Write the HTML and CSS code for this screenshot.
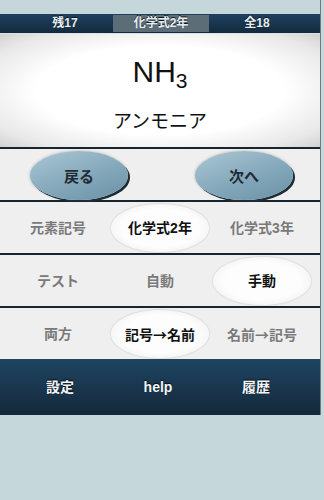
FILE: index.html
```html
<!DOCTYPE html>
<html lang="ja">
<head>
  <meta charset="UTF-8" />
  <title>化学式カード</title>
  <meta name="viewport" content="width=device-width, initial-scale=1.0" />
  <link rel="stylesheet" href="styles.css">
</head>
<body>
  <div class="app">
    <div class="status-bar">
      <div class="status-cell">残17</div>
      <div class="status-cell current">化学式2年</div>
      <div class="status-cell">全18</div>
    </div>
    <div class="card">
      <div class="formula">NH<sub>3</sub></div>
      <div class="name">アンモニア</div>
    </div>
    <div class="row nav-row">
      <button class="nav-btn">戻る</button>
      <button class="nav-btn">次へ</button>
    </div>
    <div class="row choice-row">
      <div class="choice">元素記号</div>
      <div class="choice selected">化学式2年</div>
      <div class="choice">化学式3年</div>
    </div>
    <div class="row choice-row">
      <div class="choice">テスト</div>
      <div class="choice">自動</div>
      <div class="choice selected">手動</div>
    </div>
    <div class="row choice-row">
      <div class="choice">両方</div>
      <div class="choice selected">記号<span class="arrow">→</span>名前</div>
      <div class="choice">名前<span class="arrow">→</span>記号</div>
    </div>
    <div class="footer">
      <div class="footer-item">設定</div>
      <div class="footer-item">help</div>
      <div class="footer-item">履歴</div>
    </div>
  </div>
</body>
</html>
```

FILE: styles.css
```css
body {
  margin: 0;
  background: #c6d7db;
  font-family: 'Liberation Sans', 'Noto Sans CJK JP', sans-serif;
}
.app {
  width: 320px;
  padding-top: 14px;
  border-right: 1px solid #6d7c84;
}
.status-bar {
  display: flex;
  justify-content: center;
  padding: 1px 15px 1px 17px;
  height: 17px;
  background: linear-gradient(#1f4160, #132a3d);
  border-bottom: 1px solid #d9e2e6;
}
.status-cell {
  width: 96px;
  text-align: center;
  font-size: 12px;
  font-weight: 700;
  line-height: 17px;
  color: #e6edf0;
  text-shadow: 0 -1px 0 #0b1620;
}
.status-cell.current {
  background: #5d6d77;
}
.card {
  height: 113px;
  box-sizing: border-box;
  padding-top: 18px;
  text-align: center;
  background: radial-gradient(ellipse at center, #ffffff 55%, #e8e8e8 85%, #d2d2d2 100%);
  color: #111;
}
.formula {
  font-family: 'Liberation Sans', Arial, sans-serif;
  font-size: 30px;
  line-height: 40px;
}
.formula sub {
  font-size: 21px;
  vertical-align: -6px;
  line-height: 0;
}
.name {
  margin-top: 18px;
  font-size: 19px;
  line-height: 24px;
}
.row {
  height: 51px;
  background: #efefef;
  border-top: 2px solid #18252f;
}
.nav-row {
  display: flex;
  align-items: center;
  justify-content: space-between;
  padding: 0 27px 0 30px;
}
.nav-btn {
  width: 98px;
  height: 49px;
  border: none;
  border-radius: 50%;
  background: linear-gradient(160deg, #abc8d5 0%, #8aadbf 45%, #6a91a6 100%);
  box-shadow: 2px 2px 0 #1d2c37, 0 0 3px rgba(0,0,0,0.25);
  font-family: inherit;
  font-size: 15px;
  font-weight: 700;
  color: #1f2b33;
  padding: 0;
  margin-top: 1px;
}
.choice-row {
  display: grid;
  grid-template-columns: repeat(3, 102px);
  justify-content: center;
  align-items: center;
}
.choice {
  height: 48px;
  margin: 0 2px;
  line-height: 48px;
  text-align: center;
  font-size: 14px;
  font-weight: 700;
  color: #7a7a7a;
  border-radius: 50%;
}
.choice.selected {
  background: radial-gradient(ellipse at center, #fdfdfd 55%, #f0f0f0 85%, #e4e4e4 100%);
  box-shadow: 0 0 2px rgba(0,0,0,0.22);
  color: #111;
}
.arrow {
  font-family: 'Noto Sans CJK JP', sans-serif;
}
.footer {
  display: flex;
  justify-content: center;
  padding: 0 15px 0 11px;
  height: 56px;
  background: linear-gradient(#1f4562, #14283a);
}
.footer-item {
  width: 100px;
  text-align: center;
  line-height: 56px;
  font-size: 14px;
  font-weight: 700;
  color: #f2f5f7;
  text-shadow: 0 -1px 1px #060d14;
}
```
